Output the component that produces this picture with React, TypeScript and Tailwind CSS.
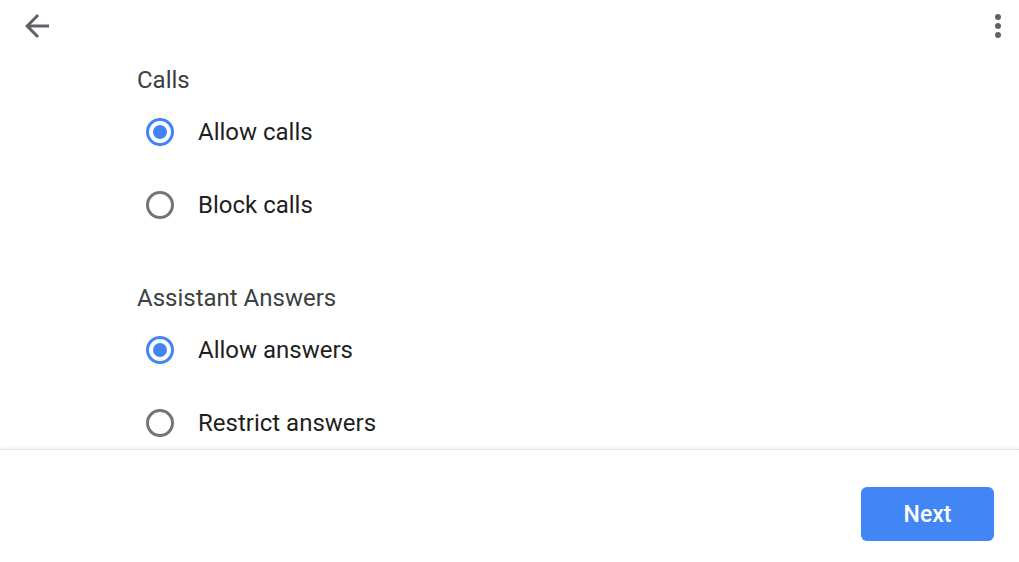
import React from "react";

function Radio({ checked, label }: { checked: boolean; label: string }) {
  return (
    <div className="flex h-[73px] items-center">
      <div className="flex w-[61px] items-center">
        <div
          className={
            checked
              ? "ml-[9px] flex h-[28px] w-[28px] items-center justify-center rounded-full border-[3px] border-[#4285f4]"
              : "ml-[9px] flex h-[28px] w-[28px] items-center justify-center rounded-full border-[3px] border-[#757575]"
          }
        >
          {checked && <div className="h-[14px] w-[14px] rounded-full bg-[#4285f4]" />}
        </div>
      </div>
      <span className="text-[24px] leading-[28px] text-[#1f1f1f]">{label}</span>
    </div>
  );
}

export default function App() {
  return (
    <div
      className="flex h-[562px] w-[1019px] flex-col overflow-hidden bg-white"
      style={{ fontFamily: "Roboto, 'Noto Sans', sans-serif" }}
    >
      <div className="flex h-[52px] shrink-0 items-center justify-between pl-[19px] pr-[3px]">
        <svg width="36" height="36" viewBox="0 0 24 24" fill="#5f6368">
          <path d="M20 11H7.83l5.59-5.59L12 4l-8 8 8 8 1.41-1.41L7.83 13H20v-2z" />
        </svg>
        <svg width="36" height="36" viewBox="0 0 24 24" fill="#5f6368">
          <circle cx="12" cy="6" r="2" />
          <circle cx="12" cy="12" r="2" />
          <circle cx="12" cy="18" r="2" />
        </svg>
      </div>
      <div className="min-h-0 flex-1 overflow-hidden pl-[137px] pt-[14px]">
        <div className="mb-[1px] text-[24px] leading-[28px] text-[#3c4043]">Calls</div>
        <Radio checked label="Allow calls" />
        <Radio checked={false} label="Block calls" />
        <div className="mb-[1px] mt-[43px] text-[24px] leading-[28px] text-[#3c4043]">
          Assistant Answers
        </div>
        <Radio checked label="Allow answers" />
        <Radio checked={false} label="Restrict answers" />
      </div>
      <div className="flex h-[113px] shrink-0 items-end justify-end border-t border-[#e3e3e3] pb-[21px] pr-[25px] shadow-[0_-2px_4px_rgba(0,0,0,0.05)]">
        <button className="flex h-[54px] w-[133px] items-center justify-center rounded-[6px] bg-[#4285f4] pt-[3px] text-[23px] font-medium text-white">
          Next
        </button>
      </div>
    </div>
  );
}
